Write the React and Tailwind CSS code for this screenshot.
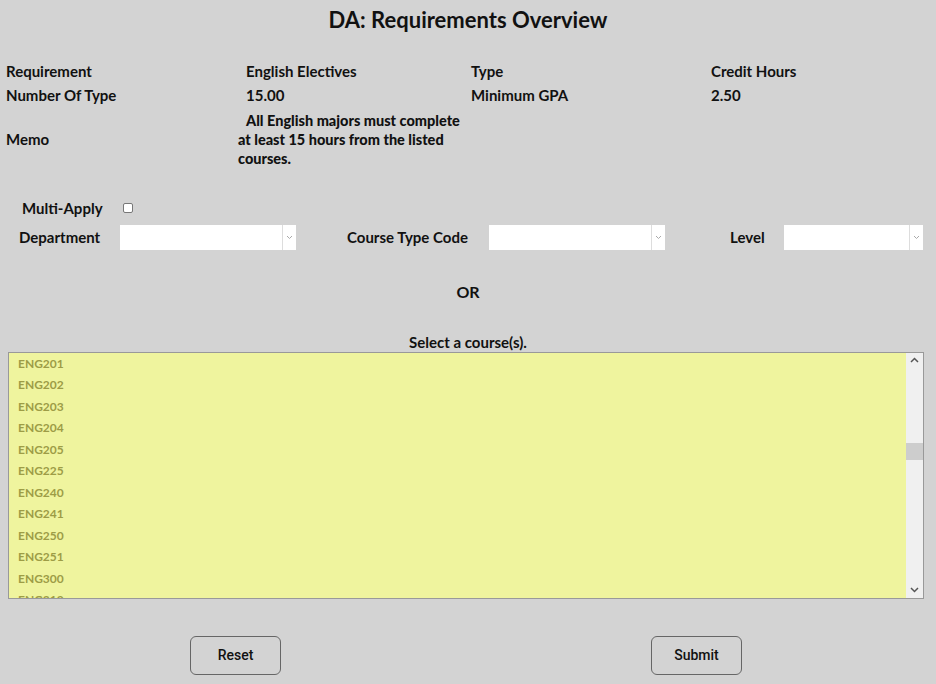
import React from 'react';

const courses = [
  'ENG201', 'ENG202', 'ENG203', 'ENG204', 'ENG205', 'ENG225',
  'ENG240', 'ENG241', 'ENG250', 'ENG251', 'ENG300', 'ENG312',
];

const SelectBox = ({ width }) => (
  <div className={`flex h-[25px] bg-white ${width}`}>
    <div className="flex-1" />
    <div className="flex w-[14px] items-center justify-center border-l border-[#ddd]">
      <svg width="7" height="5" viewBox="0 0 7 5">
        <path d="M1 1l2.5 2.5L6 1" fill="none" stroke="#aaa" strokeWidth="1" />
      </svg>
    </div>
  </div>
);

const App = () => {
  return (
    <div className="h-[684px] w-[936px] overflow-hidden bg-[#d3d3d3] text-[#111] font-['Lato',sans-serif]">
      <h1 className="pt-[6px] text-center text-[22px] font-bold leading-[28px]">DA: Requirements Overview</h1>

      <div className="mt-[25px] grid grid-cols-[240px_225px_240px_1fr] pl-[6px] text-[15px] font-bold leading-[24px]">
        <div>Requirement</div>
        <div>English Electives</div>
        <div>Type</div>
        <div>Credit Hours</div>
        <div>Number Of Type</div>
        <div>15.00</div>
        <div>Minimum GPA</div>
        <div>2.50</div>
      </div>

      <div className="mt-[4px] flex items-center pl-[6px] text-[15px] font-bold">
        <div className="w-[232px]">Memo</div>
        <div className="w-[240px] text-[14.5px] font-black leading-[19px]">
          <span className="pl-[8px]">All English majors must complete</span>
          <br />
          at least 15 hours from the listed
          <br />
          courses.
        </div>
      </div>

      <div className="mt-[29px] flex items-center pl-[22px] text-[15px] font-bold">
        <div className="w-[101px]">Multi-Apply</div>
        <div className="h-[10px] w-[10px] rounded-[2px] border border-[#777] bg-white" />
      </div>

      <div className="mt-[5px] flex items-center text-[15px] font-bold">
        <div className="w-[120px] pl-[19px]">Department</div>
        <SelectBox width="w-[176px]" />
        <div className="w-[193px] pl-[51px]">Course Type Code</div>
        <SelectBox width="w-[176px]" />
        <div className="w-[119px] pl-[65px]">Level</div>
        <SelectBox width="w-[139px]" />
      </div>

      <div className="mt-[30px] text-center text-[16px] font-bold">OR</div>

      <div className="mt-[30px] text-center text-[15px] font-bold leading-[16px]">Select a course(s).</div>

      <div className="mx-[8px] mt-[2px] flex h-[247px] w-[916px] border border-[#999] bg-[#eff49e]">
        <div className="flex-1 overflow-hidden pl-[9px]">
          {courses.map((c) => (
            <div key={c} className="h-[21.5px] text-[12px] font-bold leading-[21px] text-[#9d9c46]">
              {c}
            </div>
          ))}
        </div>
        <div className="flex w-[17px] flex-col items-center bg-[#f0f0f0]">
          <svg className="mt-[4px]" width="9" height="6" viewBox="0 0 9 6">
            <path d="M1 5l3.5-3.5L8 5" fill="none" stroke="#555" strokeWidth="1.5" />
          </svg>
          <div className="mt-[80px] h-[17px] w-[17px] bg-[#cdcdcd]" />
          <div className="flex-1" />
          <svg className="mb-[5px]" width="9" height="6" viewBox="0 0 9 6">
            <path d="M1 1l3.5 3.5L8 1" fill="none" stroke="#555" strokeWidth="1.5" />
          </svg>
        </div>
      </div>

      <div className="mt-[37px] flex font-['Roboto',sans-serif] text-[14px] font-medium">
        <button className="ml-[190px] h-[39px] w-[91px] rounded-[6px] border border-[#666] bg-[#d3d3d3]">Reset</button>
        <button className="ml-[370px] h-[39px] w-[91px] rounded-[6px] border border-[#666] bg-[#d3d3d3]">Submit</button>
      </div>
    </div>
  );
};

export default App;
